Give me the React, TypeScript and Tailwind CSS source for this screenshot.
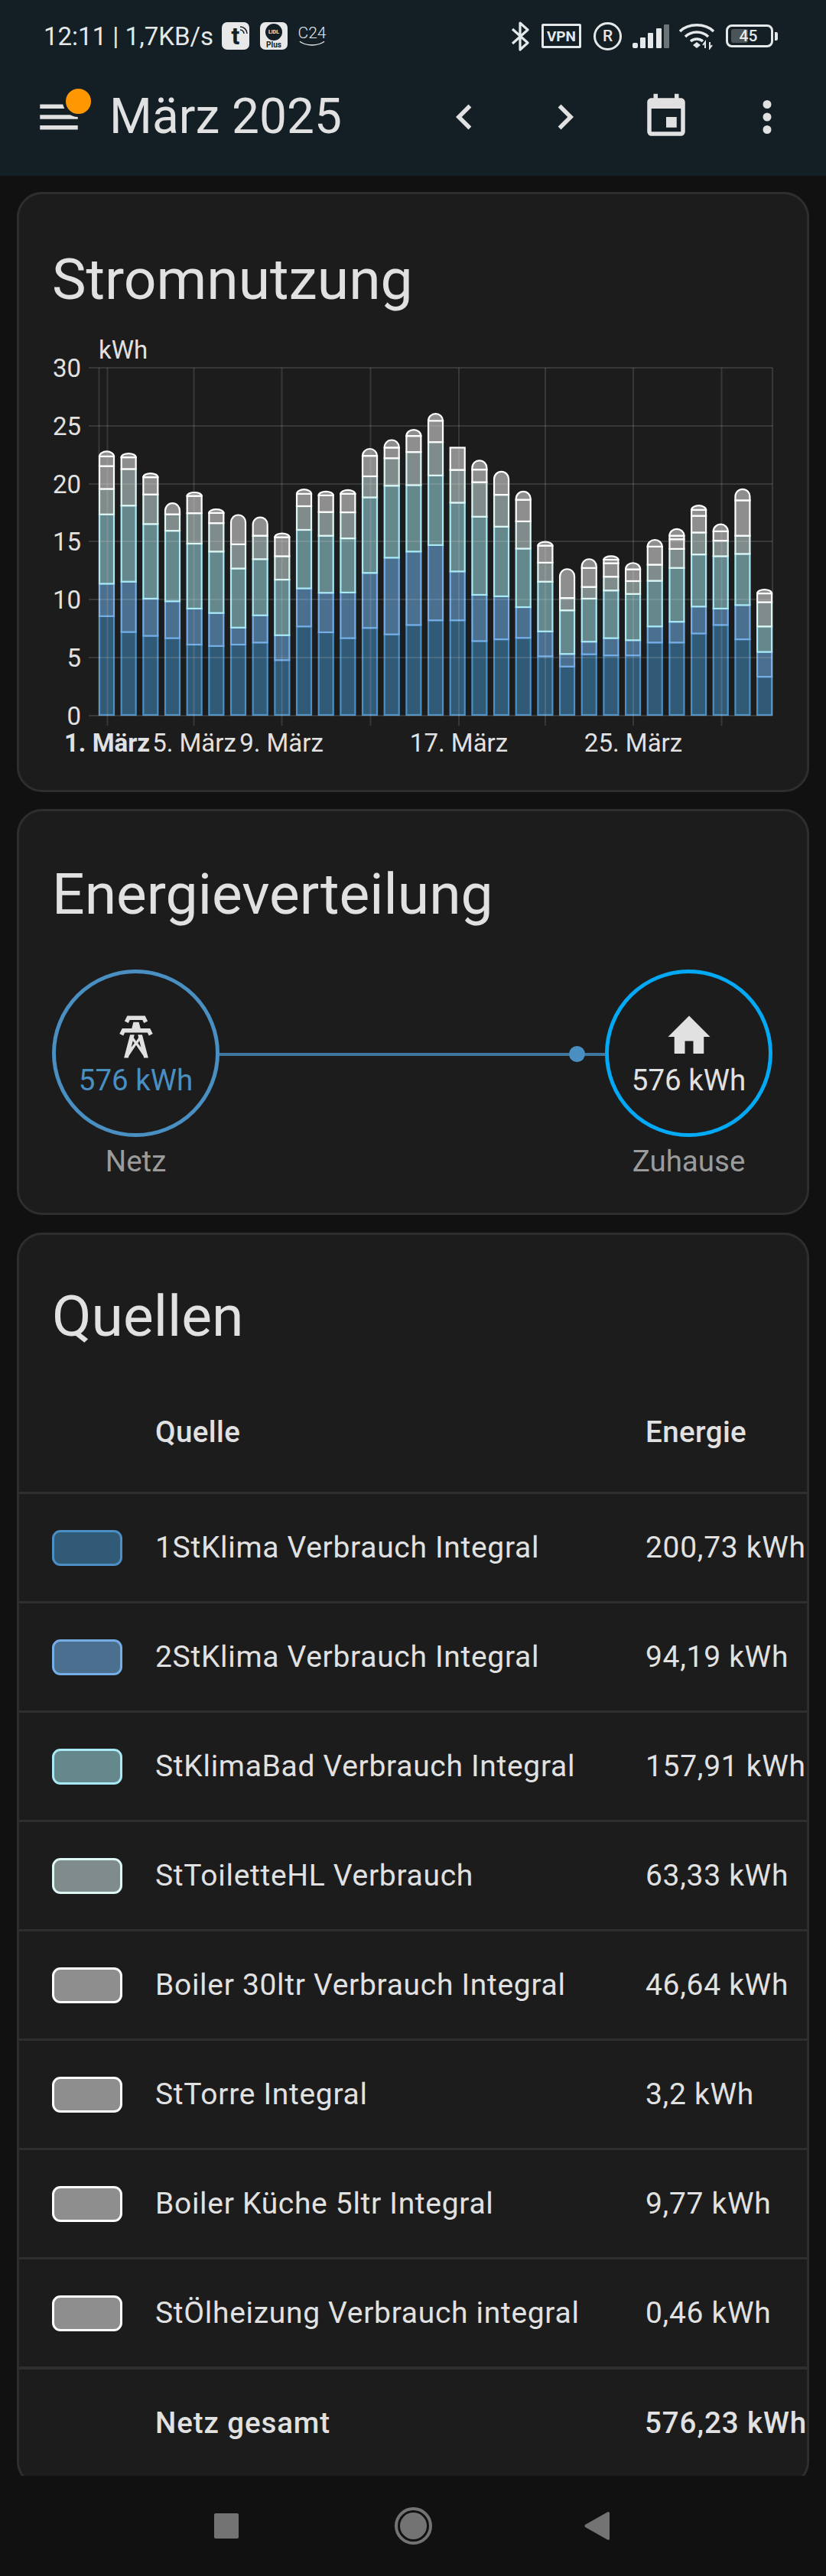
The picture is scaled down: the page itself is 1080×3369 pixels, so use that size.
import React from 'react';

const font = { fontFamily: 'Roboto, sans-serif' };

// Cumulative stack tops per day, read off the chart (axis: 0 = 1348, 30 = 160)
const stacks: number[][] = [
  [1008, 897, 660, 573, 495, 462, 445],
  [1062, 890, 630, 505, 465, 452],
  [1075, 948, 693, 592, 533, 520],
  [1083, 957, 716, 660, 622],
  [1105, 982, 760, 656, 597, 585],
  [1110, 997, 787, 690, 655, 643],
  [1105, 1047, 845, 762, 662],
  [1098, 1005, 813, 733, 670],
  [1158, 1073, 883, 803, 738, 725],
  [1043, 913, 713, 632, 590, 575],
  [1063, 928, 733, 652, 595, 582],
  [1083, 927, 742, 653, 590, 577],
  [1048, 860, 602, 530, 460, 436],
  [1070, 808, 562, 468, 432, 406],
  [1038, 787, 560, 447, 392, 371],
  [1022, 765, 527, 413, 340, 316],
  [1022, 855, 620, 508, 432],
  [1093, 935, 668, 550, 507, 476],
  [1087, 940, 702, 593, 514],
  [1082, 977, 777, 684, 610, 582],
  [1145, 1060, 890, 825, 767, 754],
  [1180, 1137, 988, 946, 847],
  [1138, 1095, 948, 908, 843, 813],
  [1142, 1083, 920, 873, 827, 815, 803],
  [1142, 1090, 932, 888, 848, 826],
  [1098, 1043, 887, 832, 770, 747],
  [1098, 1027, 843, 778, 745, 733, 710],
  [1067, 975, 797, 722, 665, 645, 630],
  [1038, 982, 803, 750, 718, 694],
  [1087, 970, 795, 733, 612, 574],
  [1215, 1130, 1043, 960, 930, 917],
];

const segColors = [
  { fill: '#315A76', stroke: '#4B8FC4' },
  { fill: '#4A6F8F', stroke: '#75AEE6' },
  { fill: '#65888D', stroke: '#A8E9F5' },
  { fill: '#808C8B', stroke: '#DDF7F5' },
  { fill: '#8E8E8E', stroke: '#FFFFFF' },
];

const toY = (z: number) => 936 - (1348 - z) / 2.613;

const Bar = ({ stack, index }: { stack: number[]; index: number }) => {
  const x = 130 + index * 28.67;
  const w = 19;
  const flatTop = index === 16;
  return (
    <g>
      {stack.map((z, i) => {
        const top = toY(z);
        const bottom = i === 0 ? 935 : toY(stack[i - 1]);
        const c = segColors[Math.min(i, 4)];
        if (i === stack.length - 1 && !flatTop) {
          const ry = Math.min(9.5, bottom - top);
          const d = `M${x} ${bottom}V${top + ry}A9.5 ${ry} 0 0 1 ${x + w} ${top + ry}V${bottom}Z`;
          return <path key={i} d={d} fill={c.fill} stroke={c.stroke} strokeWidth={2.2} />;
        }
        return <rect key={i} x={x} y={top} width={w} height={bottom - top} fill={c.fill} stroke={c.stroke} strokeWidth={2.2} />;
      })}
    </g>
  );
};

const yLabels = [
  { t: '30', y: 481 },
  { t: '25', y: 557 },
  { t: '20', y: 633 },
  { t: '15', y: 708 },
  { t: '10', y: 784 },
  { t: '5', y: 860 },
  { t: '0', y: 936 },
];
const ticks = [140.5, 253.5, 368.5, 484.5, 600, 713, 828, 943.5];
const xLabels = [
  { t: '1. März', x: 140, bold: true },
  { t: '5. März', x: 254 },
  { t: '9. März', x: 368 },
  { t: '17. März', x: 600 },
  { t: '25. März', x: 828 },
];

const UsageChart = () => (
  <svg width="1000" height="560" viewBox="40 430 1000 560" className="block" style={font}>
    {stacks.map((s, i) => <Bar key={i} stack={s} index={i} />)}
    <g stroke="#E0E0E0" strokeOpacity="0.15" strokeWidth="2">
      {yLabels.map((l) => <line key={l.t} x1="116" x2="1010" y1={l.y} y2={l.y} />)}
      {ticks.map((t) => <line key={t} x1={t} x2={t} y1="481" y2="949" />)}
      <line x1="129.5" x2="129.5" y1="481" y2="936" />
      <line x1="1010" x2="1010" y1="481" y2="936" />
    </g>
    {yLabels.map((l) => (
      <text key={l.t} x="106" y={l.y + 12} textAnchor="end" fontSize="33" fill="#E1E1E1">{l.t}</text>
    ))}
    <text x="129" y="469" fontSize="33" fill="#E1E1E1">kWh</text>
    {xLabels.map((l) => (
      <text key={l.t} x={l.x} y="983" textAnchor="middle" fontSize="33" fontWeight={l.bold ? 700 : 400} fill="#E1E1E1">{l.t}</text>
    ))}
  </svg>
);

const TowerIcon = () => (
  <svg viewBox="0 0 24 24" className="h-[66px] w-[66px] fill-[#E1E1E1]">
    <path d="M8.28,5.45L6.5,4.55L7.76,2H16.23L17.5,4.55L15.72,5.44L15,4H9L8.28,5.45M18.62,8H14.09L13.3,5H10.7L9.91,8H5.38L4.1,10.55L5.89,11.44L6.62,10H17.38L18.1,11.45L19.89,10.56L18.62,8M17.77,22H15.7L15.46,21.1L12,15.9L8.53,21.1L8.3,22H6.23L9.12,11H11.19L10.83,12.35L12,14.1L13.16,12.35L12.81,11H14.88L17.77,22M11.2,15L10.47,13.9L9.67,16.97L11.2,15M13.53,13.9L12.8,15L14.33,16.97L13.53,13.9Z" />
  </svg>
);

const HomeIcon = () => (
  <svg viewBox="0 0 24 24" className="h-[66px] w-[66px] fill-[#E1E1E1]">
    <path d="M10,20V14H14V20H19V12H22L12,2L2,12H5V20H10Z" />
  </svg>
);

const rows = [
  { name: '1StKlima Verbrauch Integral', value: '200,73 kWh', box: 'border-[#4B8FC4] bg-[#315A76]' },
  { name: '2StKlima Verbrauch Integral', value: '94,19 kWh', box: 'border-[#75AEE6] bg-[#4A6F8F]' },
  { name: 'StKlimaBad Verbrauch Integral', value: '157,91 kWh', box: 'border-[#A8E9F5] bg-[#65888D]' },
  { name: 'StToiletteHL Verbrauch', value: '63,33 kWh', box: 'border-[#DDF7F5] bg-[#808C8B]' },
  { name: 'Boiler 30ltr Verbrauch Integral', value: '46,64 kWh', box: 'border-white bg-[#8E8E8E]' },
  { name: 'StTorre Integral', value: '3,2 kWh', box: 'border-white bg-[#8E8E8E]' },
  { name: 'Boiler Küche 5ltr Integral', value: '9,77 kWh', box: 'border-white bg-[#8E8E8E]' },
  { name: 'StÖlheizung Verbrauch integral', value: '0,46 kWh', box: 'border-white bg-[#8E8E8E]' },
];

const StatusBar = () => (
  <div className="flex h-[76px] items-center justify-between pl-[57px] pr-[63px] pt-[18px] text-[#E4E8E8]">
    <div className="flex items-center">
      <span className="w-[224px] whitespace-nowrap text-[33px] leading-none" style={font}>12:11 | 1,7KB/s</span>
      {/* Tuya */}
      <div className="relative ml-[9px] flex h-[36px] w-[36px] items-center justify-center rounded-[7px] bg-[#E8E8E8]">
        <span className="text-[32px] font-bold leading-[36px] text-[#131E25]" style={font}>t</span>
        <svg viewBox="0 0 36 36" className="absolute inset-0 fill-none stroke-[#131E25]" strokeWidth="1.5">
          <path d="M24 10a5 5 0 0 1 5 5M24 6a9 9 0 0 1 9 9" />
        </svg>
      </div>
      {/* Lidl Plus */}
      <div className="ml-[14px] flex h-[36px] w-[36px] flex-col items-center rounded-[7px] bg-[#E8E8E8] pt-[2px]">
        <div className="flex h-[22px] w-[22px] items-center justify-center rounded-full bg-[#131E25]">
          <span className="text-[7px] font-bold leading-none text-[#E8E8E8]" style={font}>LIDL</span>
        </div>
        <span className="text-[10px] font-bold leading-[11px] text-[#131E25]" style={font}>Plus</span>
      </div>
      {/* C24 */}
      <div className="ml-[13px] flex w-[38px] flex-col items-center">
        <span className="text-[21px] font-light leading-[20px]" style={font}>C24</span>
        <svg viewBox="0 0 38 8" className="h-[8px] w-[34px] fill-none stroke-[#E4E8E8]" strokeWidth="1.5">
          <path d="M1 1c10 7 26 7 36 0" />
        </svg>
      </div>
    </div>
    <div className="flex items-center">
      <svg viewBox="0 0 24 39" className="h-[39px] w-[24px] fill-none stroke-[#E4E8E8]" strokeWidth="3.2" strokeLinejoin="round">
        <path d="M2 10L22 28L12 37V2L22 11L2 29" />
      </svg>
      <div className="ml-[16px] flex h-[32px] w-[52px] items-center justify-center rounded-[2px] border-[3px] border-[#E4E8E8]">
        <span className="text-[19px] font-bold leading-none" style={font}>VPN</span>
      </div>
      <div className="ml-[16px] flex h-[37px] w-[37px] items-center justify-center rounded-full border-[3px] border-[#E4E8E8]">
        <span className="text-[21px] font-medium leading-none" style={font}>R</span>
      </div>
      <svg viewBox="0 0 48 31" className="ml-[14px] h-[31px] w-[48px] fill-[#E4E8E8]">
        <rect x="0" y="24" width="7" height="7" rx="2" />
        <rect x="10" y="17" width="7" height="14" rx="1" />
        <rect x="20" y="11" width="7" height="20" rx="1" />
        <rect x="31" y="5" width="7" height="26" rx="1" />
        <rect x="41" y="0" width="7" height="31" rx="1" fill="#6B7478" />
      </svg>
      <svg viewBox="0 0 46 36" className="ml-[13px] h-[36px] w-[46px] fill-none stroke-[#E4E8E8]" strokeWidth="3.4">
        <path d="M1 12C12 1 34 1 45 12M8 19C16 11 30 11 38 19M15 25C19 21 27 21 31 25" />
        <path d="M18 30l5-4 5 4-5 4z" fill="#E4E8E8" stroke="none" />
        <path d="M34 34v-8l-3 4M40 26v8l3-4" strokeWidth="2" />
      </svg>
      <div className="relative ml-[15px] flex h-[30px] w-[62px] items-center justify-center rounded-[8px] border-[3px] border-[#E4E8E8]">
        <div className="absolute inset-y-[3px] left-[4px] w-[22px] rounded-[3px] bg-[#4B5559]" />
        <span className="relative pr-[3px] text-[21px] font-medium leading-none" style={font}>45</span>
      </div>
      <div className="ml-[2px] h-[11px] w-[4px] rounded-r-[2px] bg-[#E4E8E8]" />
    </div>
  </div>
);

const IconButton = ({ d }: { d: string }) => (
  <div className="flex h-[132px] w-[132px] items-center justify-center">
    <svg viewBox="0 0 24 24" className="h-[66px] w-[66px] fill-[#E1E1E1]"><path d={d} /></svg>
  </div>
);

const AppBar = () => (
  <div className="flex h-[154px] items-center pl-[11px] pr-[11px]">
    <div className="relative flex h-[132px] w-[132px] items-center justify-center">
      <svg viewBox="0 0 24 24" className="h-[66px] w-[66px] fill-[#E1E1E1]"><path d="M3,6H21V8H3V6M3,11H21V13H3V11M3,16H21V18H3V16Z" /></svg>
      <div className="absolute left-[71px] top-[25px] h-[41px] w-[41px] rounded-full border-[4px] border-[#131E25] bg-[#FF9800]" />
    </div>
    <div className="flex-1 text-[64px] leading-none text-[#E1E1E1]" style={font}>März 2025</div>
    <IconButton d="M15.41,16.58L10.83,12L15.41,7.41L14,6L8,12L14,18L15.41,16.58Z" />
    <IconButton d="M8.59,16.58L13.17,12L8.59,7.41L10,6L16,12L10,18L8.59,16.58Z" />
    <IconButton d="M19,19H5V8H19M16,1V3H8V1H6V3H5C3.89,3 3,3.89 3,5V19A2,2 0 0,0 5,21H19A2,2 0 0,0 21,19V5C21,3.89 20.1,3 19,3H18V1M17,12H12V17H17V12Z" />
    <IconButton d="M12,16A2,2 0 0,1 14,18A2,2 0 0,1 12,20A2,2 0 0,1 10,18A2,2 0 0,1 12,16M12,10A2,2 0 0,1 14,12A2,2 0 0,1 12,14A2,2 0 0,1 10,12A2,2 0 0,1 12,10M12,4A2,2 0 0,1 14,6A2,2 0 0,1 12,8A2,2 0 0,1 10,6A2,2 0 0,1 12,4Z" />
  </div>
);

const FlowNode = ({ ring, text, label, icon }: { ring: string; text: string; label: string; icon: React.ReactNode }) => (
  <div className="flex w-[219px] flex-col items-center">
    <div className={`flex h-[219px] w-[219px] flex-col items-center rounded-full border-[5px] pt-[50px] ${ring}`}>
      {icon}
      <span className={`text-[38.5px] leading-[48px] ${text}`}>576 kWh</span>
    </div>
    <span className="mt-[10px] text-[38.5px] leading-[44px] text-[#9B9B9B]">{label}</span>
  </div>
);

export default function App() {
  return (
    <div className="h-[3369px] w-[1080px] overflow-hidden bg-[#111111]" style={font}>
      <div className="h-[230px] bg-[#131E25]">
        <StatusBar />
        <AppBar />
      </div>

      <div className="h-[3008px] overflow-hidden px-[22px] pt-[21px]">
        {/* Stromnutzung */}
        <div className="h-[785px] rounded-[33px] border-[3px] border-[#2E2E2E] bg-[#1C1C1C] pl-[15px] pt-[61px]">
          <h2 className="pl-[28px] text-[75px] leading-[100px] text-[#E1E1E1]">Stromnutzung</h2>
          <div className="mt-[15px]">
            <UsageChart />
          </div>
        </div>

        {/* Energieverteilung */}
        <div className="mt-[22px] h-[531px] rounded-[33px] border-[3px] border-[#2E2E2E] bg-[#1C1C1C] pl-[43px] pr-[45px] pt-[58px]">
          <h2 className="text-[75px] leading-[100px] text-[#E1E1E1]">Energieverteilung</h2>
          <div className="relative mt-[49px] flex justify-between">
            <FlowNode ring="border-[#4A8FC2]" text="text-[#4A8FC2]" label="Netz" icon={<TowerIcon />} />
            <div className="mt-[109px] h-[4px] flex-1 bg-[#3F769E]" />
            <div className="absolute left-[676px] top-[100px] h-[21px] w-[21px] rounded-full bg-[#4A8FC2]" />
            <FlowNode ring="border-[#03A9F4]" text="text-[#E1E1E1]" label="Zuhause" icon={<HomeIcon />} />
          </div>
        </div>

        {/* Quellen */}
        <div className="mt-[23px] h-[1640px] rounded-[33px] border-[3px] border-[#2E2E2E] bg-[#1C1C1C] pt-[56px]">
          <h2 className="pl-[43px] text-[75px] leading-[100px] text-[#E1E1E1]">Quellen</h2>
          <div className="mt-[40px] flex h-[140px] items-center pb-[17px] text-[38.5px] font-medium tracking-[0.4px] text-[#E1E1E1]">
            <span className="ml-[178px] w-[641px]">Quelle</span>
            <span>Energie</span>
          </div>
          {rows.map((r) => (
            <div key={r.name} className="flex h-[143px] items-center border-t-[3px] border-[#2E2E2E] text-[39px] tracking-[0.69px] text-[#E1E1E1]">
              <div className={`ml-[43px] h-[47px] w-[92px] rounded-[11px] border-[3px] ${r.box}`} />
              <span className="ml-[43px] w-[641px] whitespace-nowrap">{r.name}</span>
              <span className="whitespace-nowrap">{r.value}</span>
            </div>
          ))}
          <div className="flex h-[143px] items-center border-t-[4px] border-[#2E2E2E] text-[38.5px] font-medium tracking-[0.9px] text-[#E1E1E1]">
            <span className="ml-[178px] w-[641px]">Netz gesamt</span>
            <span className="whitespace-nowrap">576,23 kWh</span>
          </div>
        </div>
      </div>

      {/* Android nav bar */}
      <div className="flex h-[131px] items-center pl-[280px]">
        <div className="h-[33px] w-[32px] rounded-[2px] bg-[#737373]" />
        <div className="ml-[204px] flex h-[49px] w-[49px] items-center justify-center rounded-full border-[4px] border-[#737373]">
          <div className="h-[35px] w-[35px] rounded-full bg-[#737373]" />
        </div>
        <svg viewBox="0 0 33 37" className="ml-[199px] h-[37px] w-[33px] fill-[#737373]">
          <path d="M33 1V36L31 37L1 20Q0 18.500 1 17L31 0Z" />
        </svg>
      </div>
    </div>
  );
}
